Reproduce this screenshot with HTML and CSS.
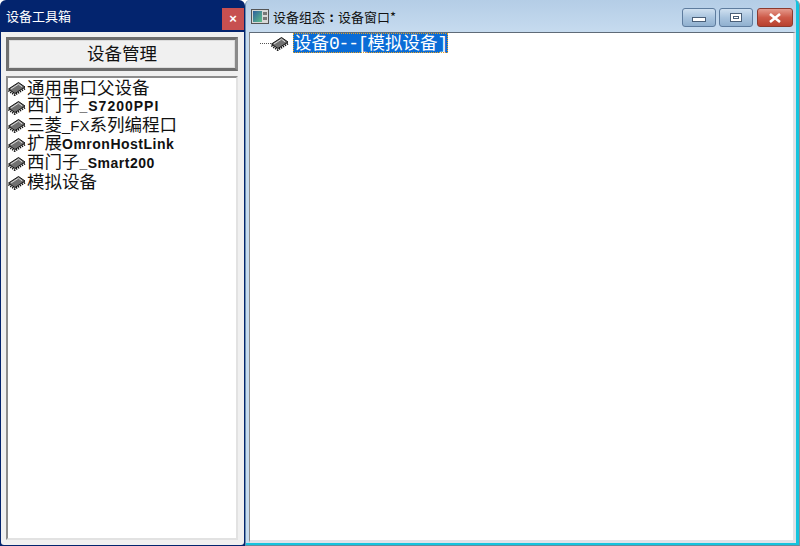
FILE: index.html
```html
<!DOCTYPE html>
<html lang="zh-CN">
<head>
    <meta charset="UTF-8">
    <title>设备组态</title>
    <link rel="stylesheet" href="styles.css">
</head>
<body>
    <svg class="defs" width="0" height="0">
        <symbol id="chip" viewBox="0 0 19 15">
            <path d="M1.5 8L11.5 1.5L18 6L8 12.5Z" fill="#707070" stroke="#151515" stroke-width="1"/>
            <path d="M4 8L11.5 3.2L15 5.8" stroke="#dcdcdc" stroke-width="1" fill="none"/>
            <path d="M1.5 9.5L7.8 14L18 7.5" stroke="#111" stroke-width="2" stroke-dasharray="1.3 1" fill="none"/>
        </symbol>
    </svg>
    <div class="desktop">
        <section class="toolbox">
            <div class="toolbox-title">
                <span>设备工具箱</span>
                <span class="toolbox-close">×</span>
            </div>
            <div class="toolbox-body">
                <button class="manage-btn"><span>设备管理</span></button>
                <ul class="device-list">
                    <li><svg class="chip"><use href="#chip"/></svg><span>通用串口父设备</span></li>
                    <li><svg class="chip"><use href="#chip"/></svg><span>西门子<b class="wide">_S7200PPI</b></span></li>
                    <li><svg class="chip"><use href="#chip"/></svg><span>三菱<i class="fx">_FX</i>系列编程口</span></li>
                    <li><svg class="chip"><use href="#chip"/></svg><span>扩展<b>OmronHostLink</b></span></li>
                    <li><svg class="chip"><use href="#chip"/></svg><span>西门子<b>_Smart200</b></span></li>
                    <li><svg class="chip"><use href="#chip"/></svg><span>模拟设备</span></li>
                </ul>
            </div>
        </section>
        <section class="editor">
            <div class="editor-title">
                <svg class="app-icon" width="18" height="15" viewBox="0 0 18 15">
                    <defs>
                        <linearGradient id="screen" x1="0" y1="0" x2="1" y2="1">
                            <stop offset="0" stop-color="#2f5f9e"/>
                            <stop offset="1" stop-color="#5fc08a"/>
                        </linearGradient>
                    </defs>
                    <rect x="0.5" y="0.5" width="17" height="14" fill="#d8d8d8" stroke="#555"/>
                    <rect x="2" y="2" width="9" height="11" fill="url(#screen)"/>
                    <rect x="12" y="3" width="4" height="3" fill="#777"/>
                    <rect x="12" y="8" width="4" height="3" fill="#777"/>
                </svg>
                <span class="editor-name">设备组态<span class="colon">:</span>设备窗口*</span>
                <div class="win-btns">
                    <span class="win-btn"><i class="min-glyph"></i></span>
                    <span class="win-btn"><i class="max-glyph"></i></span>
                    <span class="win-btn win-close">
                        <svg width="14" height="10" viewBox="0 0 14 10"><path d="M2 1L12 9M12 1L2 9" stroke="#fff" stroke-width="2.6" fill="none"/></svg>
                    </span>
                </div>
            </div>
            <div class="editor-client">
                <div class="tree-row">
                    <i class="tree-dots"></i>
                    <svg class="chip"><use href="#chip"/></svg>
                    <span class="tree-sel">设备<i class="mono">0--[</i>模拟设备<i class="mono">]</i></span>
                </div>
            </div>
        </section>
    </div>
</body>
</html>
```

FILE: styles.css
```css
html, body {
    margin: 0;
    padding: 0;
    background: #fff;
}
.defs {
    display: block;
    height: 0;
}
.desktop {
    display: flex;
    width: 800px;
    height: 546px;
    overflow: hidden;
    font-family: "Noto Sans CJK SC", "Liberation Sans", sans-serif;
}

/* left tool window */
.toolbox {
    width: 245px;
    display: flex;
    flex-direction: column;
    background: #03246e;
    border-radius: 6px 6px 0 0;
    padding: 2px 1px 1px 1px;
    box-sizing: border-box;
    height: 546px;
}
.toolbox-title {
    height: 30px;
    display: flex;
    justify-content: space-between;
    color: #fff;
    font-size: 13px;
    line-height: 28px;
    padding-left: 5px;
    flex: none;
}
.toolbox-close {
    width: 22px;
    height: 22px;
    margin-top: 6px;
    background: #c75050;
    color: #fff;
    font-size: 13px;
    line-height: 21px;
    text-align: center;
    font-family: "Liberation Sans", sans-serif;
    font-weight: bold;
}
.toolbox-body {
    flex: 1;
    background: #f0f0f0;
    padding: 5px 6px 5px 5px;
    display: flex;
    flex-direction: column;
    gap: 5px;
    border-radius: 0 0 3px 3px;
}
.manage-btn {
    height: 34px;
    flex: none;
    background: #f0f0f0;
    border: 3px solid #6e6e6e;
    border-right-color: #8a8a8a;
    outline: 1px solid #dcdcdc;
    outline-offset: -4px;
    font-family: inherit;
    font-size: 17.5px;
    color: #111;
    padding: 0 0 4px 0;
}
.device-list {
    flex: 1;
    list-style: none;
    margin: 0;
    padding: 1px 0 0 0;
    background: #fff;
    border-top: 2px solid #8c8c8c;
    border-left: 2px solid #8c8c8c;
    border-right: 2px solid #e2e2e2;
    border-bottom: 2px solid #e2e2e2;
}
.device-list li {
    height: 18.8px;
    display: flex;
    align-items: center;
    font-size: 17.5px;
    line-height: 19px;
    color: #111;
    white-space: nowrap;
}
.device-list li span {
    margin-bottom: 4px;
}
.chip {
    width: 19px;
    height: 15px;
    flex: none;
    margin: 0 1px 0 -1px;
}
.device-list b {
    font-family: "Liberation Sans", sans-serif;
    font-size: 14px;
    font-weight: bold;
    letter-spacing: 0.5px;
}
.device-list b.wide {
    letter-spacing: 1px;
}
.fx {
    font-family: "Liberation Sans", sans-serif;
    font-style: normal;
    font-size: 15px;
}
.mono {
    font-family: "Liberation Mono", monospace;
    font-style: normal;
    font-size: 18px;
    letter-spacing: -1.2px;
}

/* right editor window */
.editor {
    flex: 1;
    display: flex;
    flex-direction: column;
    background: linear-gradient(#b4cde6, #c6dbef 32px, #c6dbef);
    box-shadow: inset -3px -2px 0 #14c4de;
    border-right: 1px solid #8a8f99;
    border-bottom: 1px solid #6a8a9a;
    border-left: 1px solid #6b8fb0;
    border-radius: 5px 5px 0 0;
    box-sizing: border-box;
    height: 546px;
}
.editor-title {
    height: 32px;
    flex: none;
    display: flex;
    align-items: center;
    padding-left: 5px;
    font-size: 13px;
    color: #111;
    box-sizing: border-box;
}
.colon {
    display: inline-block;
    width: 13px;
    text-align: center;
    font-weight: bold;
}
.app-icon {
    flex: none;
    margin-right: 4px;
}
.win-btns {
    margin: 3px 6px 0 auto;
    display: flex;
    gap: 3px;
}
.win-btn {
    width: 32px;
    height: 17px;
    display: flex;
    align-items: center;
    justify-content: center;
    border: 1px solid #5e7c9e;
    border-radius: 3px;
    background: linear-gradient(#cfe0f0, #a9c4de 50%, #90b0cf);
}
.win-close {
    width: 34px;
    margin-left: 1px;
    border-color: #8c3a2e;
    background: linear-gradient(#e59a8c, #cd5a48 50%, #b8402e);
}
.min-glyph {
    width: 12px;
    height: 3px;
    margin-top: 4px;
    background: #fff;
    border: 1px solid #4a5f78;
}
.max-glyph {
    width: 6px;
    height: 3px;
    background: #fff;
    border: 2px solid #fff;
    outline: 1px solid #4a5f78;
    box-shadow: inset 0 0 0 1px #4a5f78;
}
.editor-client {
    flex: 1;
    background: #fff;
    margin: 0 3px 2px 3px;
    border-top: 1px solid #5f6b78;
    border-left: 1px solid #8c8c8c;
    border-right: 3px solid #dfe3e8;
    border-bottom: 3px solid #dfe3e8;
    padding-top: 1px;
}
.tree-row {
    display: flex;
    align-items: center;
    height: 19px;
    padding-left: 10px;
}
.tree-dots {
    width: 11px;
    border-top: 1px dotted #555;
    flex: none;
}
.tree-sel {
    margin: 0 0 2px 3px;
    padding: 0 1px;
    background: #0a6cd6;
    color: #fff;
    font-size: 17.5px;
    line-height: 18px;
    outline: 1px dotted #e8a020;
    outline-offset: -1px;
    white-space: nowrap;
}
```
